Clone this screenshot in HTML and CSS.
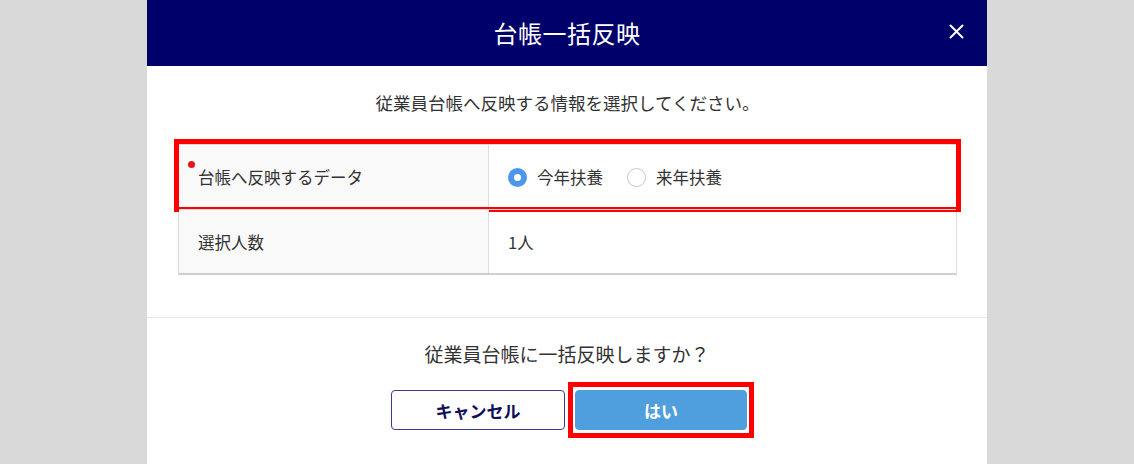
FILE: index.html
```html
<!DOCTYPE html>
<html lang="ja">
<head>
<meta charset="utf-8">
<link rel="stylesheet" href="styles.css">
</head>
<body>
<div class="modal">
  <div class="modal-header">
    <h1 class="modal-title">台帳一括反映</h1>
    <button class="close-btn" aria-label="閉じる">
      <svg width="15" height="15" viewBox="0 0 15 15"><path d="M1.5 1.5 L13.5 13.5 M13.5 1.5 L1.5 13.5" stroke="#fff" stroke-width="2" fill="none" stroke-linecap="round"/></svg>
    </button>
  </div>
  <div class="modal-body">
    <p class="lead">従業員台帳へ反映する情報を選択してください。</p>
    <div class="table">
      <div class="row row-marked">
        <div class="cell-label"><span class="req-dot"></span>台帳へ反映するデータ</div>
        <div class="cell-value">
          <label class="radio"><span class="radio-circle checked"></span>今年扶養</label>
          <label class="radio"><span class="radio-circle"></span>来年扶養</label>
        </div>
        <span class="mark"></span>
      </div>
      <div class="row">
        <div class="cell-label">選択人数</div>
        <div class="cell-value">1人</div>
      </div>
    </div>
  </div>
  <div class="modal-footer">
    <p class="question">従業員台帳に一括反映しますか？</p>
    <div class="actions">
      <button class="btn btn-cancel">キャンセル</button>
      <div class="btn-wrap">
        <button class="btn btn-ok">はい</button>
        <span class="mark mark-btn"></span>
      </div>
    </div>
  </div>
</div>
</body>
</html>
```
FILE: styles.css
```css
* { box-sizing: border-box; }
html, body { margin: 0; padding: 0; }
body {
  background: #d9d9d9;
  font-family: "Noto Sans CJK JP", "Noto Sans", sans-serif;
  color: #333;
  height: 464px;
  overflow: hidden;
}
.modal {
  width: 840px;
  margin: 0 auto;
  background: #fff;
  min-height: 464px;
}
.modal-header {
  position: relative;
  height: 66px;
  background: #00006a;
  display: flex;
  align-items: center;
  justify-content: center;
}
.modal-title {
  margin: 0;
  color: #fff;
  font-size: 24px;
  font-weight: 400;
  line-height: 1;
  letter-spacing: 0.5px;
}
.close-btn {
  position: absolute;
  right: 23px;
  top: 24px;
  width: 15px;
  height: 15px;
  padding: 0;
  border: 0;
  background: none;
  display: flex;
}
.modal-body {
  padding: 25px 30px 42px 31px;
  border-bottom: 1px solid #e6e6e6;
}
.lead {
  margin: 0 0 29px;
  text-align: center;
  font-size: 17.5px;
  line-height: 24px;
  color: #333;
}
.table {
  border: 1px solid #dcdcdc;
  border-bottom: 2px solid #d0d0d0;
}
.row {
  position: relative;
  display: flex;
  height: 64px;
}
.row + .row { border-top: 1px solid #dcdcdc; }
.cell-label {
  position: relative;
  width: 310px;
  flex: none;
  background: #f9f9f9;
  border-right: 1px solid #dcdcdc;
  display: flex;
  align-items: center;
  padding-left: 19px;
  font-size: 16.5px;
}
.req-dot {
  position: absolute;
  left: 9px;
  top: 16px;
  width: 7px;
  height: 7px;
  border-radius: 50%;
  background: #e8141b;
}
.cell-value {
  flex: 1;
  display: flex;
  align-items: center;
  padding-left: 19px;
  gap: 24px;
  font-size: 16.5px;
}
.radio {
  display: flex;
  align-items: center;
  gap: 10px;
}
.radio-circle {
  width: 19px;
  height: 19px;
  border-radius: 50%;
  border: 1px solid #c8c8c8;
  background: #fff;
}
.radio-circle.checked {
  border: 6px solid #4d97ea;
}
.mark {
  position: absolute;
  left: -5px;
  right: -5px;
  top: -6px;
  bottom: -3px;
  border: 5px solid #ff0000;
  pointer-events: none;
}
.modal-footer {
  padding-top: 23px;
  text-align: center;
}
.question {
  margin: 0 0 23px;
  font-size: 19px;
  line-height: 26px;
  color: #333;
}
.actions {
  display: flex;
  justify-content: center;
  gap: 10px;
  padding-left: 4px;
}
.btn {
  width: 174px;
  height: 40px;
  border-radius: 4px;
  font-family: "Noto Sans CJK JP", sans-serif;
  font-size: 17px;
  font-weight: 700;
  cursor: pointer;
}
.btn-cancel {
  background: #fff;
  border: 1px solid #3b3b90;
  color: #10105a;
}
.btn-wrap { position: relative; display: flex; }
.btn-ok {
  width: 172px;
  background: #4f9fde;
  border: 1px solid #4f9fde;
  color: #fff;
}
.mark-btn {
  left: -7px;
  right: -7px;
  top: -8px;
  bottom: -8px;
}
```
